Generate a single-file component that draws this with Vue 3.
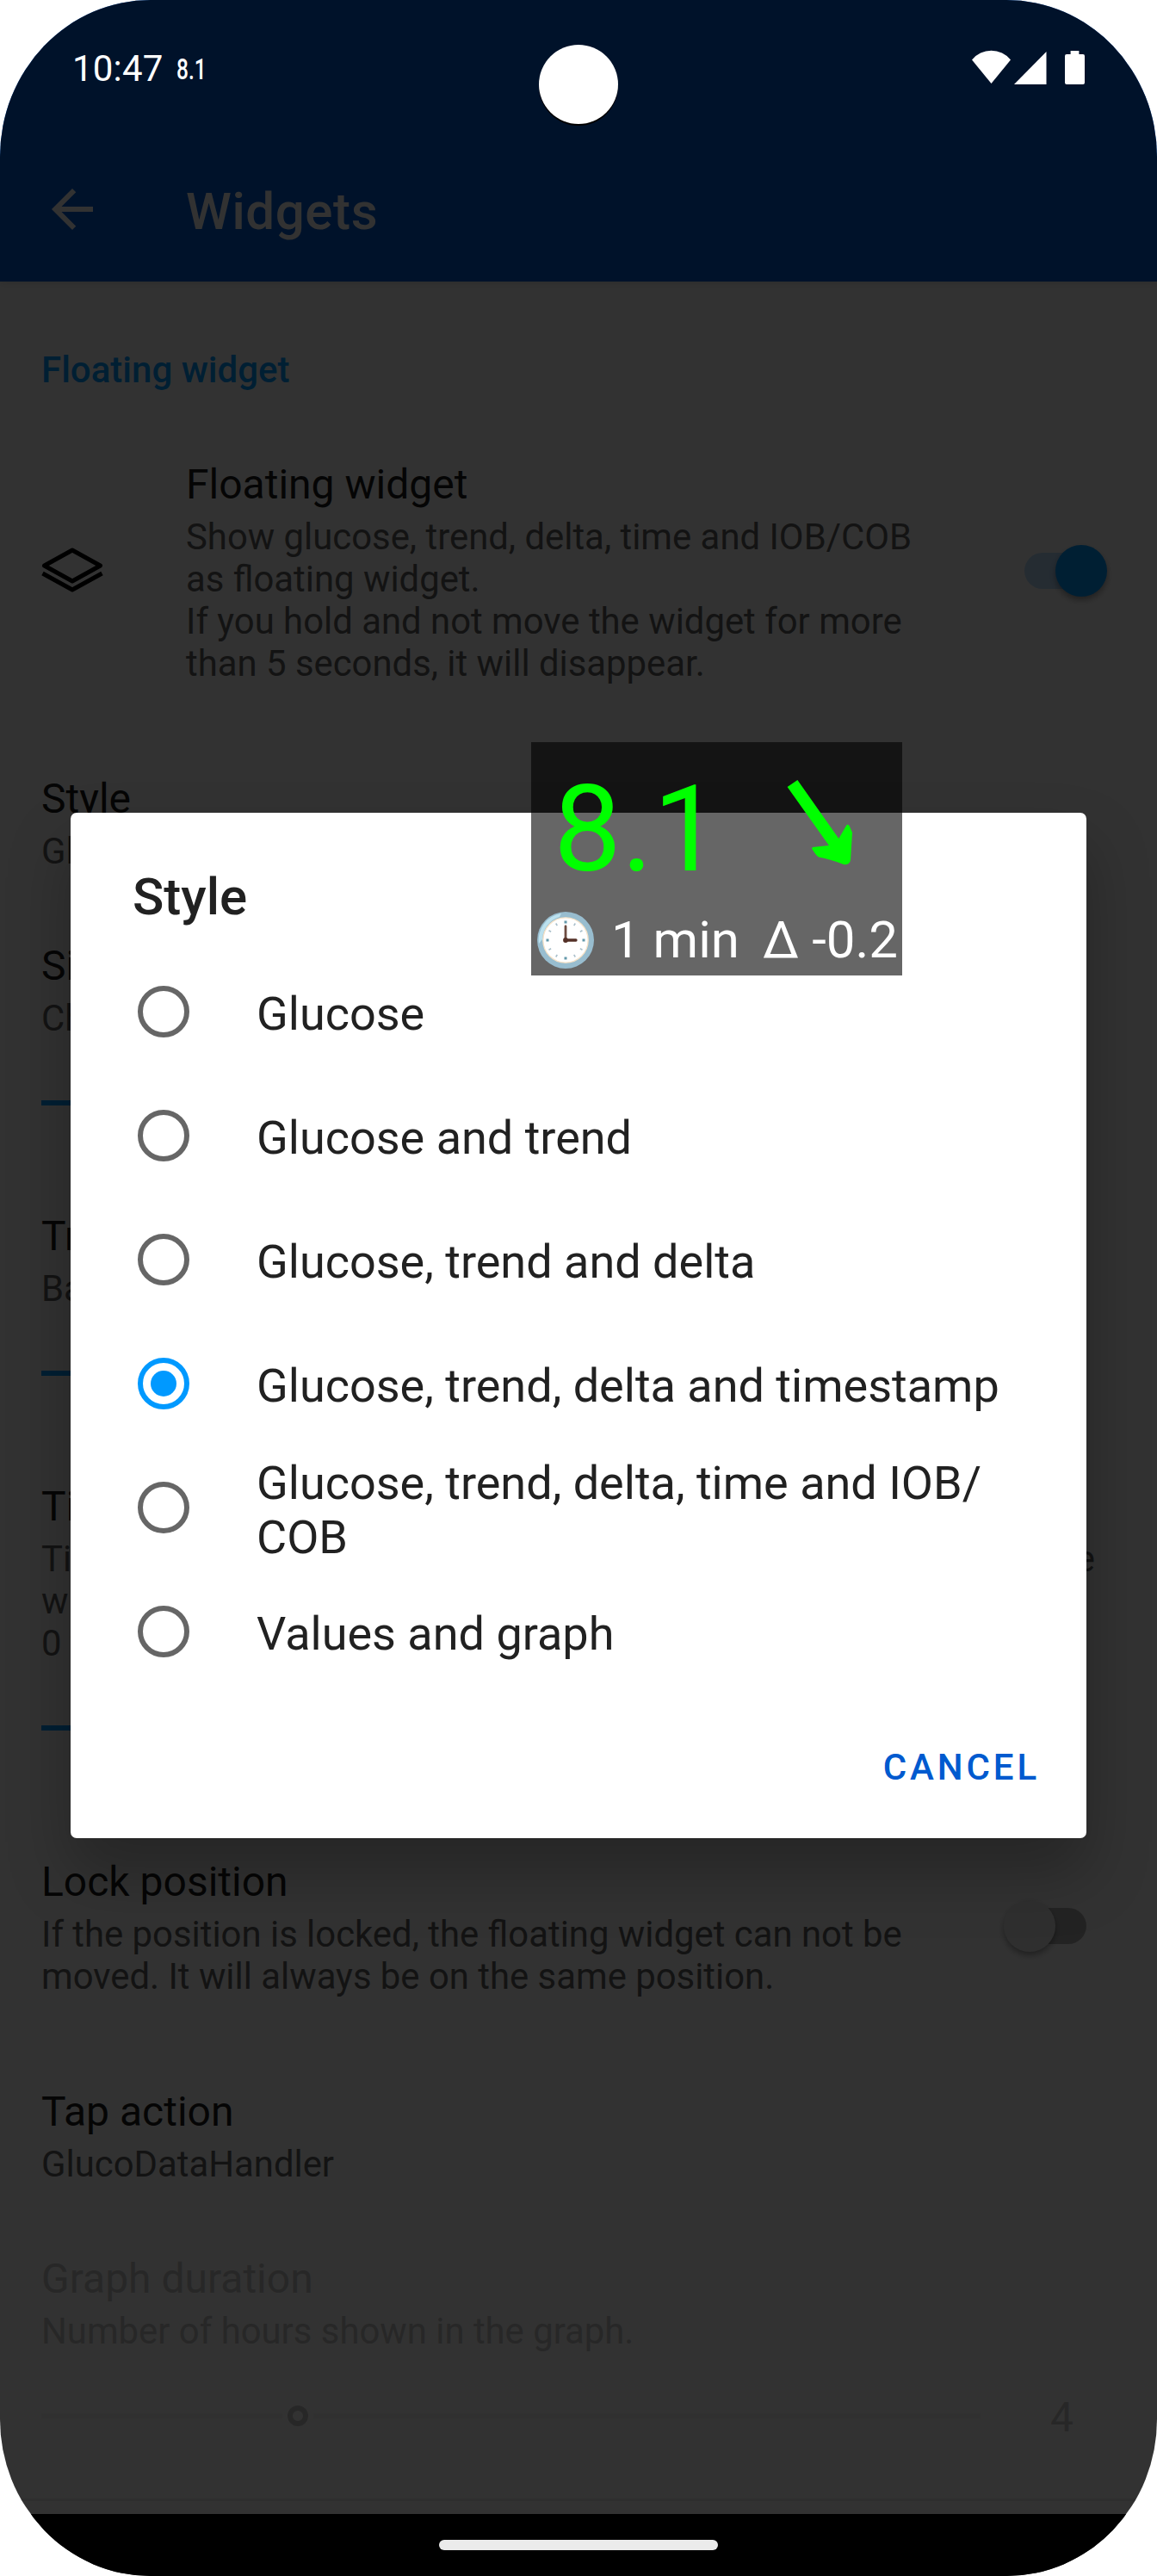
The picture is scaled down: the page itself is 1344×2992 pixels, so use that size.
<script setup>
import { ref } from 'vue'

const options = [
  ['Glucose'],
  ['Glucose and trend'],
  ['Glucose, trend and delta'],
  ['Glucose, trend, delta and timestamp'],
  ['Glucose, trend, delta, time and IOB/', 'COB'],
  ['Values and graph'],
]
const selected = ref(3)
const hourMarks = [0, 30, 60, 90, 120, 150, 180, 210, 240, 270, 300, 330]
</script>

<template>
  <div class="phone">
    <header class="appbar">
      <svg class="back" viewBox="0 0 24 24"><path d="M20 11H7.83l5.59-5.59L12 4l-8 8 8 8 1.41-1.41L7.83 13H20v-2z" /></svg>
      <h1>Widgets</h1>
    </header>

    <main class="prefs">
      <h2 class="category">Floating widget</h2>

      <section class="pref lead">
        <svg class="layers" viewBox="0 0 72 54">
          <path d="M36 4 L68.500 22 L36 40 L3.500 22 Z" />
          <path d="M1.500 31 L36 50 L70.500 31" />
        </svg>
        <div class="lead-text">
          <h3>Floating widget</h3>
          <p>Show glucose, trend, delta, time and IOB/COB<br />as floating widget.<br />If you hold and not move the widget for more<br />than 5 seconds, it will disappear.</p>
        </div>
        <span class="switch on"><i class="thumb"></i></span>
      </section>

      <section class="pref style">
        <h3>Style</h3>
        <p>Glucose, trend, delta and timestamp</p>
      </section>

      <section class="pref size">
        <h3>Size</h3>
        <p>Change the size of the floating widget.</p>
      </section>
      <div class="slider first"></div>

      <section class="pref transparency">
        <h3>Transparency</h3>
        <p>Background transparency.</p>
      </section>
      <div class="slider"></div>

      <section class="pref time">
        <h3>Time to close</h3>
        <p class="spread"><span>Time in seconds to hold</span><span>the</span></p>
        <p>widget to close it.<br />0 to disable.</p>
      </section>
      <div class="slider"></div>

      <section class="pref lock">
        <div>
          <h3>Lock position</h3>
          <p>If the position is locked, the floating widget can not be<br />moved. It will always be on the same position.</p>
        </div>
        <span class="switch off"><i class="thumb"></i></span>
      </section>

      <section class="pref tap">
        <h3>Tap action</h3>
        <p>GlucoDataHandler</p>
      </section>

      <section class="pref graph disabled">
        <h3>Graph duration</h3>
        <p>Number of hours shown in the graph.</p>
        <div class="duration">
          <i class="seg before"></i><i class="ring"></i><i class="seg after"></i><span class="value">4</span>
        </div>
      </section>
      <div class="divider"></div>
    </main>

    <div class="scrim">
      <section class="dialog">
        <h2>Style</h2>
        <ul>
          <li v-for="(lines, i) in options" :key="i" @click="selected = i">
            <span class="radio" :class="{ checked: selected === i }"></span>
            <span class="label"><template v-for="(line, n) in lines" :key="n"><br v-if="n" />{{ line }}</template></span>
          </li>
        </ul>
        <button>CANCEL</button>
      </section>
    </div>

    <aside class="floating">
      <div class="reading">
        <span class="glucose">8.1</span>
        <svg class="trend" viewBox="0 0 80 106">
          <path d="M4.600 14 L16.400 6 L64.300 74 L73 59 Q75 56 77 60 L80 67 L78 99 Q77 105 70 104 Q55 98 41 95.500 Q38 94 33 85.500 L34 84 L52.900 82 Z" />
        </svg>
      </div>
      <div class="details">
        <svg class="clock" viewBox="-33 -33 66 66">
          <circle r="33" fill="#98bdcf" />
          <path d="M-31 4 A31 31 0 0 1 -5 -31 L-7 -27 A28 28 0 0 0 -27 -1 Z" fill="#bce1ee" />
          <circle r="26.200" fill="#fff" stroke="#f7e3c8" stroke-width="1.300" />
          <rect
            v-for="a in hourMarks"
            :key="a"
            :x="a % 90 ? -0.8 : -1.5"
            y="-22.5"
            :width="a % 90 ? 1.6 : 3"
            height="3"
            :fill="a % 90 ? '#a9bfca' : '#6398aa'"
            :transform="`rotate(${a})`"
          />
          <path d="M0 0 V-16" stroke="#6d4c41" stroke-width="2.800" stroke-linecap="round" />
          <path d="M0 0 H12" stroke="#543027" stroke-width="3.300" stroke-linecap="round" />
          <circle r="2.900" fill="#543027" />
        </svg>
        <span class="age">1 min</span>
        <span class="delta">Δ -0.2</span>
      </div>
    </aside>

    <div class="statusbar">
      <span class="clock-text">10:47</span>
      <span class="notif">8.1</span>
      <svg class="sys" viewBox="0 0 134 42">
        <path d="M0 11.500 A29 29 0 0 1 45 11.500 L22.500 39 Z" />
        <path d="M49 40 L86.500 2 V40 Z" />
        <path d="M110 5 H114.600 V1 H124.400 V5 H129 Q131 5 131 7 V38 Q131 40 129 40 H110 Q108 40 108 38 V7 Q108 5 110 5 Z" />
      </svg>
    </div>
    <div class="camera"></div>

    <footer class="navbar"><span class="pill"></span></footer>
  </div>
</template>

<style>
html,
body {
  margin: 0;
  background: #fff;
}
</style>

<style scoped>
.phone {
  position: relative;
  display: flex;
  flex-direction: column;
  width: 1344px;
  height: 2992px;
  overflow: hidden;
  border-radius: 175px / 182px;
  background: #fafafa;
  font-family: Roboto, sans-serif;
}
h1,
h2,
h3,
p,
ul {
  margin: 0;
  padding: 0;
  white-space: nowrap;
}
.appbar {
  display: flex;
  box-sizing: border-box;
  height: 327px;
  padding: 207px 48px 0;
  background: #005acf;
  color: #fafafa;
  box-shadow: 0 2px 8px rgba(0, 0, 0, 0.12);
}
.back {
  width: 72px;
  height: 72px;
  fill: currentColor;
}
.appbar h1 {
  margin-left: 96px;
  font-size: 60px;
  font-weight: 500;
  letter-spacing: 0.6px;
  line-height: 77px;
}
.prefs {
  flex: 1;
}
.category {
  margin: 78px 0 0 48px;
  color: #0099ff;
  font-size: 42px;
  font-weight: 500;
  line-height: 50px;
}
.pref {
  padding: 0 48px;
}
.pref h3 {
  margin-bottom: 8px;
  color: #1a1a1a;
  font-size: 48px;
  font-weight: 400;
  line-height: 56px;
}
.pref p {
  color: #626262;
  font-size: 41.85px;
  line-height: 49px;
}
.lead {
  display: flex;
  margin-top: 80px;
}
.layers {
  width: 72px;
  height: 54px;
  margin-top: 100px;
  fill: none;
  stroke: #000;
  stroke-width: 5;
  stroke-linejoin: round;
}
.lead-text {
  width: 974px;
  margin-left: 96px;
}
.switch {
  display: block;
  flex: none;
  width: 84px;
  height: 42px;
  border-radius: 21px;
}
.thumb {
  display: block;
  width: 60px;
  height: 60px;
  margin-top: -9px;
  border-radius: 50%;
  box-shadow: 0 4px 7px rgba(0, 0, 0, 0.35);
}
.switch.on {
  margin-top: 107px;
  background: #b8dafa;
}
.switch.on .thumb {
  margin-left: 36px;
  background: #0099ff;
}
.switch.off {
  margin: 58px 34px 0 auto;
  background: #b1b1b1;
}
.switch.off .thumb {
  margin-left: -12px;
  background: #ececec;
}
.style {
  margin-top: 105px;
}
.size {
  margin-top: 81px;
}
.slider {
  width: 560px;
  height: 6px;
  margin: 71px 0 0 48px;
  background: #0099ff;
}
.transparency {
  margin-top: 124px;
}
.time {
  margin-top: 124px;
}
.spread {
  display: flex;
  justify-content: space-between;
  margin-right: 24px;
}
.lock {
  display: flex;
  margin-top: 148px;
}
.tap {
  margin-top: 105px;
}
.graph {
  margin-top: 81px;
}
.disabled h3,
.disabled p,
.disabled .value {
  color: #c3c3c3;
}
.duration {
  display: flex;
  align-items: center;
  height: 56px;
  margin-top: 46px;
}
.seg {
  height: 6px;
  background: #f0f0f0;
}
.before {
  width: 280px;
}
.after {
  width: 775px;
}
.ring {
  box-sizing: border-box;
  width: 24px;
  height: 24px;
  margin: 0 6px;
  border: 6px solid #c3c3c3;
  border-radius: 50%;
}
.value {
  margin: 4px 0 0 81px;
  font-size: 48px;
  line-height: 56px;
}
.divider {
  height: 3px;
  margin-top: 68px;
  background: #e6e6e6;
}
.scrim {
  position: absolute;
  inset: 0;
  background: rgba(0, 0, 0, 0.8);
}
.dialog {
  display: flex;
  flex-direction: column;
  box-sizing: border-box;
  width: 1180px;
  height: 1191px;
  margin: 944px 0 0 82px;
  border-radius: 7px;
  background: #fff;
  box-shadow: 0 40px 72px rgba(0, 0, 0, 0.25);
  color: #212121;
}
.dialog h2 {
  margin: 63px 0 0 72px;
  font-size: 60px;
  font-weight: 500;
  line-height: 70px;
}
.dialog ul {
  margin-top: 26px;
  list-style: none;
}
.dialog li {
  display: flex;
  align-items: center;
  height: 144px;
  padding-left: 78px;
}
.radio {
  display: flex;
  align-items: center;
  justify-content: center;
  box-sizing: border-box;
  width: 60px;
  height: 60px;
  border: 6px solid #666;
  border-radius: 50%;
}
.radio.checked {
  border-color: #0099ff;
}
.radio.checked::after {
  width: 30px;
  height: 30px;
  border-radius: 50%;
  background: #0099ff;
  content: '';
}
.label {
  margin-left: 78px;
  padding-top: 5px;
  font-size: 54px;
  line-height: 63px;
}
.dialog button {
  align-self: flex-end;
  margin: 61px 54px 0 0;
  padding: 0;
  border: 0;
  background: none;
  color: #005acf;
  font: 500 42px/50px Roboto, sans-serif;
  letter-spacing: 3.9px;
}
.floating {
  position: absolute;
  top: 862px;
  left: 617px;
  width: 431px;
  height: 271px;
  background: rgba(0, 0, 0, 0.6);
  white-space: nowrap;
}
.reading {
  display: flex;
  height: 190px;
}
.glucose {
  margin: 19px 0 0 26px;
  color: #00ff00;
  font-size: 140px;
  line-height: 164px;
}
.trend {
  width: 80px;
  height: 106px;
  margin: 38px 58px 0 auto;
  overflow: visible;
  fill: #00ff00;
}
.details {
  display: flex;
  color: #fff;
  font-size: 60px;
  line-height: 72px;
}
.clock {
  width: 66px;
  height: 66px;
  margin: 7px 0 0 7px;
}
.age {
  margin: 4px 0 0 20px;
}
.delta {
  margin: 4px 0 0 27px;
}
.statusbar {
  position: absolute;
  top: 0;
  left: 0;
  display: flex;
  width: 1344px;
  color: #fff;
  white-space: nowrap;
}
.clock-text {
  margin: 55px 0 0 84px;
  font-size: 42px;
  letter-spacing: 0.2px;
  line-height: 50px;
}
.notif {
  width: 32px;
  margin: 60px 0 0 15px;
  font-size: 34px;
  font-weight: 500;
  line-height: 40px;
  transform: scaleX(0.72);
  transform-origin: left;
}
.sys {
  width: 134px;
  height: 42px;
  margin: 58px 81px 0 auto;
  fill: #fff;
}
.camera {
  position: absolute;
  top: 52px;
  left: 626px;
  width: 92px;
  height: 92px;
  border-radius: 50%;
  background: #fff;
  box-shadow: 0 2px 0 #000;
}
.navbar {
  position: absolute;
  right: 0;
  bottom: 0;
  left: 0;
  display: flex;
  justify-content: center;
  height: 72px;
  background: #000;
}
.pill {
  width: 324px;
  height: 12px;
  margin-top: 30px;
  border-radius: 6px;
  background: #ebebeb;
}
</style>
